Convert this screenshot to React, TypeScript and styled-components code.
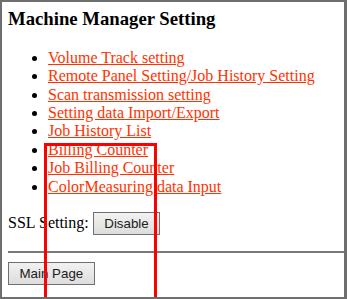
import React from "react";
import styled, { createGlobalStyle } from "styled-components";

const Global = createGlobalStyle`
  html, body { margin: 0; padding: 0; background: #ffffff; }
  body { font-family: "Liberation Serif", "Times New Roman", serif; font-size: 16px; color: #000; }
`;

const Frame = styled.div`
  position: relative;
  box-sizing: border-box;
  width: 347px;
  height: 299px;
  overflow: hidden;
  border-style: solid;
  border-color: #6e6e6e;
  border-width: 2px 3px 2px 2px;
  padding: 6px 0 0 6px;
  background: #ffffff;
`;

const Title = styled.h3`
  margin: 0 0 18.72px 0;
  font-size: 18.72px;
  font-weight: bold;
`;

const MenuList = styled.ul`
  margin: 0 0 16px 0;
  padding-left: 40px;
  list-style: disc;
`;

const MenuItem = styled.li`
  line-height: 18.4px;
`;

const MenuLink = styled.a`
  color: #ff3300;
  text-decoration: underline;
`;

const SettingRow = styled.p`
  margin: 0 0 16px 0;
  display: flex;
  align-items: center;
  gap: 4px;
`;

const Button = styled.button`
  font-family: "Liberation Sans", Arial, sans-serif;
  font-size: 13.33px;
  color: #202020;
  padding: 3px 10.5px;
  height: 23px;
  border: 1px solid #707070;
  border-radius: 0;
  background: linear-gradient(#f2f2f2, #dddddd);
  line-height: 15px;
`;

const Rule = styled.hr`
  margin: 0 0 9px 0;
  border: 0;
  border-top: 2px solid #7a7a7a;
  height: 0;
`;

const Highlight = styled.div`
  position: absolute;
  left: 42px;
  top: 141px;
  width: 107px;
  height: 200px;
  border: 3px solid #ff0000;
  pointer-events: none;
`;

const items = [
  "Volume Track setting",
  "Remote Panel Setting/Job History Setting",
  "Scan transmission setting",
  "Setting data Import/Export",
  "Job History List",
  "Billing Counter",
  "Job Billing Counter",
  "ColorMeasuring data Input",
];

export default function App() {
  return (
    <>
      <Global />
      <Frame>
        <Title>Machine Manager Setting</Title>
        <MenuList>
          {items.map((t) => (
            <MenuItem key={t}>
              <MenuLink href="#">{t}</MenuLink>
            </MenuItem>
          ))}
        </MenuList>
        <SettingRow>
          SSL Setting: <Button>Disable</Button>
        </SettingRow>
        <Rule />
        <Button>Main Page</Button>
        <Highlight />
      </Frame>
    </>
  );
}
